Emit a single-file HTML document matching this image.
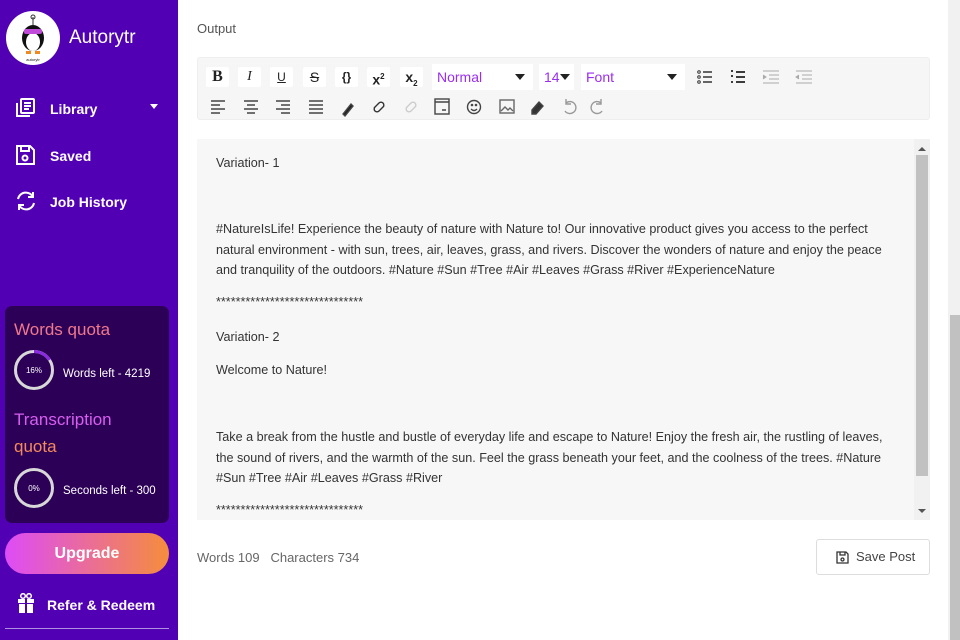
<!DOCTYPE html>
<html><head><meta charset="utf-8"><style>
*{margin:0;padding:0;box-sizing:border-box}
body{width:960px;height:640px;overflow:hidden;font-family:"Liberation Sans",sans-serif;background:#fff;position:relative}
.sb{position:absolute;left:0;top:0;width:178px;height:640px;background:#5200b4;color:#fff}
.logo{position:absolute;left:6px;top:11px;width:54px;height:54px;border-radius:50%;background:#fff}
.brand{position:absolute;left:69px;top:27px;font-size:19px}
.nav{position:absolute;left:14px;font-size:14px;font-weight:bold}
.nav svg{position:absolute;left:0;top:-4px}
.nav span{position:absolute;left:36px;top:0;white-space:nowrap}
.quota{position:absolute;left:5px;top:306px;width:164px;height:217px;background:#2c0057;border-radius:7px}
.qt{position:absolute;left:9px;font-size:17px}
.ring{position:absolute;left:9px;width:40px;height:40px}
.rl{position:absolute;left:58px;font-size:11.5px;white-space:nowrap}
.up{position:absolute;left:5px;top:533px;width:164px;height:41px;border-radius:21px;background:linear-gradient(90deg,#dd4cf7,#f58d3c);font-size:16px;font-weight:bold;text-align:center;line-height:41px}
.main{position:absolute;left:197px}
.tb{position:absolute;left:197px;top:57px;width:733px;height:63px;background:#f6f6f6;border:1px solid #eee;border-radius:3px}
.b{position:absolute;width:23px;height:20px;background:#fff;border-radius:2px;font-size:14px;text-align:center;line-height:20px;color:#222}
.sel{position:absolute;top:6px;height:26px;background:#fff;color:#9b2df0;font-size:14px;line-height:26px;padding-left:5px}
.sel i{position:absolute;right:8px;top:10px;border-left:5px solid transparent;border-right:5px solid transparent;border-top:6px solid #222}
.ed{position:absolute;left:197px;top:139px;width:733px;height:381px;background:#f7f7f7;overflow:hidden}
.ed p{position:absolute;left:19px;font-size:12.6px;color:#333;line-height:20.5px;width:670px}
</style></head><body>
<div class="sb">
<div class="logo"><svg width="54" height="54" viewBox="0 0 54 54"><ellipse cx="27" cy="27" rx="11" ry="13" fill="#111"/><ellipse cx="27" cy="31" rx="7" ry="9" fill="#fff"/><rect x="18" y="18" width="18" height="5" rx="2" fill="#c04bd8"/><path d="M20 40h5v3h-5zM29 40h5v3h-5z" fill="#f08a20"/><line x1="27" y1="6" x2="27" y2="14" stroke="#333"/><circle cx="27" cy="6" r="2" fill="none" stroke="#333"/><text x="27" y="50" font-size="4" text-anchor="middle" fill="#111">autorytr</text></svg></div>
<div class="brand">Autorytr</div>
<div class="nav" style="top:101px"><svg width="22" height="22" viewBox="0 0 22 22" fill="none" stroke="#fff" stroke-width="2"><rect x="7" y="2" width="13" height="14" rx="1"/><path d="M3 6v13h13M10 6h7M10 9h7M10 12h5"/></svg><span>Library</span></div>
<div style="position:absolute;left:150px;top:104px;border-left:4px solid transparent;border-right:4px solid transparent;border-top:5px solid #fff"></div>
<div class="nav" style="top:148px"><svg width="22" height="22" viewBox="0 0 22 22" fill="none" stroke="#fff" stroke-width="2"><path d="M3 2h13l4 4v14H3z M7 2v5h8V2"/><circle cx="11" cy="14" r="2.5"/></svg><span>Saved</span></div>
<div class="nav" style="top:194px"><svg width="24" height="22" viewBox="0 0 24 22" fill="none" stroke="#fff" stroke-width="2"><path d="M4 9a8 8 0 0 1 15-2M20 13a8 8 0 0 1-15 2"/><path d="M19 2v5h-5M5 20v-5h5"/></svg><span>Job History</span></div>
<div class="quota">
<div class="qt" style="top:14px;color:#f0788c">Words quota</div>
<svg class="ring" style="top:44px" viewBox="0 0 40 40"><circle cx="20" cy="20" r="18.5" fill="none" stroke="#d8d8d8" stroke-width="3"/><path d="M20 1.5A18.5 18.5 0 0 1 35.5 10" fill="none" stroke="#8a2be2" stroke-width="3"/><text x="20" y="23" font-size="8" fill="#fff" text-anchor="middle" font-family="Liberation Sans">16%</text></svg>
<div class="rl" style="top:62px">Words left - 4219</div>
<div class="qt" style="top:104px;color:#d85ef0">Transcription</div>
<div class="qt" style="top:131px;color:#f48a5c">quota</div>
<svg class="ring" style="top:162px" viewBox="0 0 40 40"><circle cx="20" cy="20" r="18.5" fill="none" stroke="#d8d8d8" stroke-width="3"/><text x="20" y="23" font-size="8" fill="#fff" text-anchor="middle" font-family="Liberation Sans">0%</text></svg>
<div class="rl" style="top:179px">Seconds left - 300</div>
</div>
<div class="up">Upgrade</div>
<div class="nav" style="top:597px;left:17px"><svg width="18" height="20" viewBox="0 0 18 20" fill="#fff"><rect x="1" y="6" width="16" height="4"/><rect x="2" y="11" width="14" height="9"/><rect x="8" y="5" width="2" height="15" fill="#5200b4"/><circle cx="6" cy="3" r="2.3" fill="none" stroke="#fff" stroke-width="1.5"/><circle cx="12" cy="3" r="2.3" fill="none" stroke="#fff" stroke-width="1.5"/></svg><span style="left:30px">Refer &amp; Redeem</span></div>
<div style="position:absolute;left:5px;top:628px;width:164px;height:1px;background:#b090e0"></div>
</div>

<div class="main" style="top:21px;font-size:13px;color:#555">Output</div>
<div class="tb">
<div class="b" style="left:8px;top:9px;font-weight:bold;font-family:'Liberation Serif',serif;font-size:16px">B</div>
<div class="b" style="left:40px;top:9px;font-style:italic;font-family:'Liberation Serif',serif">I</div>
<div class="b" style="left:72px;top:9px;text-decoration:underline;font-size:12px">U</div>
<div class="b" style="left:105px;top:9px;text-decoration:line-through">S</div>
<div class="b" style="left:137px;top:9px;font-weight:bold;font-size:12px">{}</div>
<div class="b" style="left:169px;top:9px;font-weight:bold">x<sup style="font-size:8px">2</sup></div>
<div class="b" style="left:202px;top:9px;font-weight:bold">x<sub style="font-size:8px">2</sub></div>
<div class="sel" style="left:234px;width:101px">Normal<i></i></div>
<div class="sel" style="left:341px;width:35px">14<i style="right:4px"></i></div>
<div class="sel" style="left:383px;width:104px">Font<i></i></div>
<svg style="position:absolute;left:497px;top:10px" width="20" height="18" viewBox="0 0 20 18" stroke="#333" fill="none"><circle cx="4" cy="4" r="1.3"/><circle cx="4" cy="9" r="1.3"/><circle cx="4" cy="14" r="1.3"/><path d="M8 4h9M8 9h9M8 14h9" stroke-width="1.5"/></svg>
<svg style="position:absolute;left:530px;top:10px" width="20" height="18" viewBox="0 0 20 18" stroke="#222" fill="none"><path d="M3 3h2M3 8h2M3 14h2M8 4h9M8 9h9M8 14h9" stroke-width="1.7"/></svg>
<svg style="position:absolute;left:563px;top:10px" width="20" height="18" viewBox="0 0 20 18" stroke="#aaa" fill="none"><path d="M2 3h16M8 7h10M8 11h10M2 15h16"/><path d="M2 7l3 2-3 2" fill="#aaa"/></svg>
<svg style="position:absolute;left:596px;top:10px" width="20" height="18" viewBox="0 0 20 18" stroke="#aaa" fill="none"><path d="M2 3h16M8 7h10M8 11h10M2 15h16"/><path d="M5 7l-3 2 3 2" fill="#aaa"/></svg>
<svg style="position:absolute;left:8px;top:38px;width:600px;height:22px" viewBox="0 0 600 22" fill="none" stroke="#444" stroke-width="1.4">
<path d="M5 5h14M5 9h9M5 13h14M5 17h9"/>
<path d="M38 5h14M41 9h8M38 13h14M41 17h8"/>
<path d="M70 5h14M75 9h9M70 13h14M75 17h9"/>
<path d="M103 5h14M103 9h14M103 13h14M103 17h14"/>
<path d="M137 18l8-10 2 2-8 10z" fill="#222"/>
<path d="M168 12l5-5a2.5 2.5 0 0 1 4 4l-3 3M178 10l-5 5a2.5 2.5 0 0 1-4-4l3-3" stroke="#333"/>
<path d="M200 12l5-5a2.5 2.5 0 0 1 4 4l-3 3M210 10l-5 5a2.5 2.5 0 0 1-4-4l3-3" stroke="#ccc"/>
<rect x="229" y="3" width="14" height="15"/><path d="M229 6h14M236 14h4" />
<circle cx="268" cy="11" r="6.5"/><path d="M265 13q3 3 6 0"/><circle cx="266" cy="9" r=".6"/><circle cx="270" cy="9" r=".6"/>
<rect x="294" y="4" width="14" height="13" stroke="#666"/><path d="M295 15l4-4 3 3 2-2 3 3" stroke="#666"/>
<path d="M326 14l7-8 4 4-7 8h-4z" fill="#333"/>
<path d="M360 7a6 6 0 1 1-1 8M360 3v5h5" stroke="#999"/>
<path d="M395 7a6 6 0 1 0 1 8M395 3v5h-5" stroke="#999"/>
</svg>
</div>

<div class="ed">
<p style="top:14px">Variation- 1</p>
<p style="top:80px">#NatureIsLife! Experience the beauty of nature with Nature to! Our innovative product gives you access to the perfect natural environment - with sun, trees, air, leaves, grass, and rivers. Discover the wonders of nature and enjoy the peace and tranquility of the outdoors. #Nature #Sun #Tree #Air #Leaves #Grass #River #ExperienceNature</p>
<p style="top:153px">******************************</p>
<p style="top:188px">Variation- 2</p>
<p style="top:221px">Welcome to Nature!</p>
<p style="top:288px">Take a break from the hustle and bustle of everyday life and escape to Nature! Enjoy the fresh air, the rustling of leaves, the sound of rivers, and the warmth of the sun. Feel the grass beneath your feet, and the coolness of the trees. #Nature #Sun #Tree #Air #Leaves #Grass #River</p>
<p style="top:361px">******************************</p>
<div style="position:absolute;left:717px;top:0;width:16px;height:381px;background:#f1f1f1"></div>
<div style="position:absolute;left:719px;top:16px;width:12px;height:321px;background:#c1c1c1"></div>
<div style="position:absolute;left:721px;top:8px;border-left:4px solid transparent;border-right:4px solid transparent;border-bottom:4px solid #555"></div>
<div style="position:absolute;left:721px;top:370px;border-left:4px solid transparent;border-right:4px solid transparent;border-top:4px solid #555"></div>
</div>

<div class="main" style="top:550px;font-size:13px;color:#666">Words 109 &nbsp; Characters 734</div>
<div style="position:absolute;left:816px;top:539px;width:114px;height:36px;border:1px solid #ddd;border-radius:3px;font-size:13px;color:#444;line-height:34px;padding-left:39px">Save Post
<svg style="position:absolute;left:19px;top:11px" width="13" height="13" viewBox="0 0 13 13" fill="none" stroke="#333" stroke-width="1.3"><path d="M1 1h9l2 2v9H1z M4 1v3h5V1"/><circle cx="6.5" cy="8.5" r="1.5"/></svg></div>

<div style="position:absolute;left:948px;top:0;width:12px;height:640px;background:#f1f1f1"></div>
<div style="position:absolute;left:950px;top:315px;width:10px;height:325px;background:#c1c1c1"></div>
</body></html>
